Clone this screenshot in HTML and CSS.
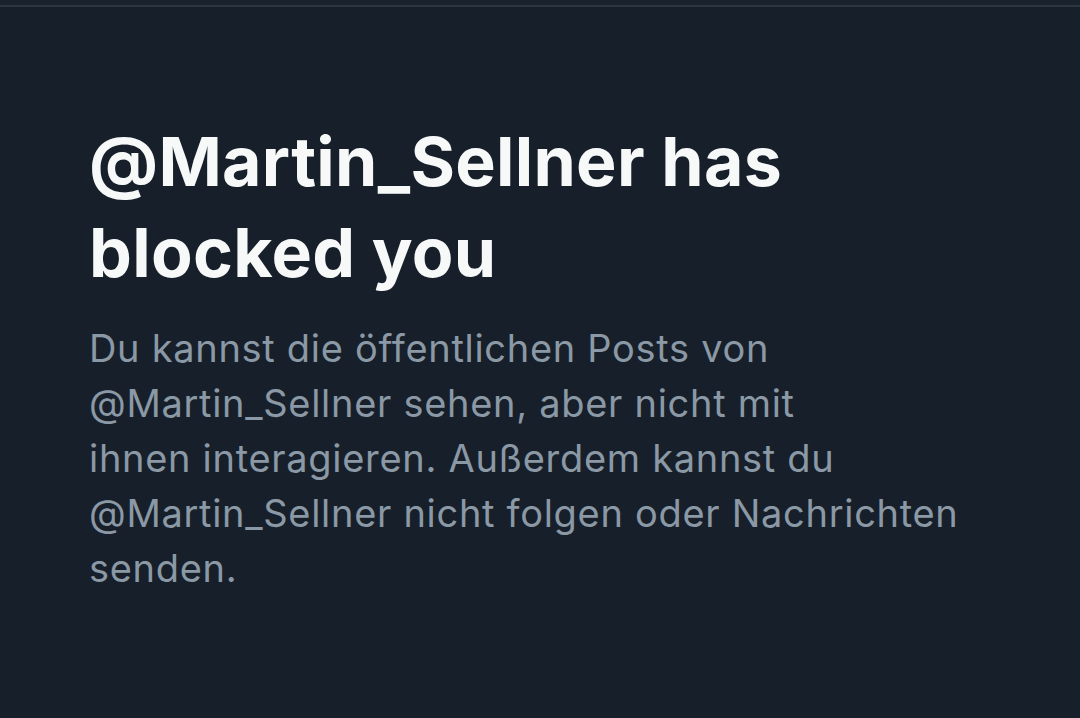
FILE: index.html
```html
<!DOCTYPE html>
<html lang="de">
<head>
<meta charset="utf-8">
<link rel="stylesheet" href="styles.css">
</head>
<body>
<div class="page">
  <div class="topline"></div>
  <main class="content">
    <h1 class="title">@Martin_Sellner has<br>blocked you</h1>
    <p class="desc">Du kannst die öffentlichen Posts von<br>@Martin_Sellner sehen, aber nicht mit<br>ihnen interagieren. Außerdem kannst du<br>@Martin_Sellner nicht folgen oder Nachrichten<br>senden.</p>
  </main>
</div>
</body>
</html>
```
FILE: styles.css
```css
html, body {
  margin: 0;
  padding: 0;
  background: #17202a;
}
.page {
  width: 1080px;
  height: 718px;
  overflow: hidden;
  background: #17202a;
}
.topline {
  height: 5px;
  border-bottom: 2px solid #2c3640;
  background: #1a232d;
}
.content {
  padding: 109px 90px 0 89px;
}
.title {
  margin: 0;
  font-family: Inter, "Noto Sans", sans-serif;
  font-weight: 700;
  font-size: 68px;
  line-height: 91px;
  letter-spacing: 0.3px;
  color: #f7f9f9;
}
.desc {
  margin: 23px 0 0 0;
  font-family: Inter, "Noto Sans", sans-serif;
  font-weight: 400;
  font-size: 38px;
  line-height: 55px;
  letter-spacing: 0.7px;
  color: #8b98a5;
}
```
